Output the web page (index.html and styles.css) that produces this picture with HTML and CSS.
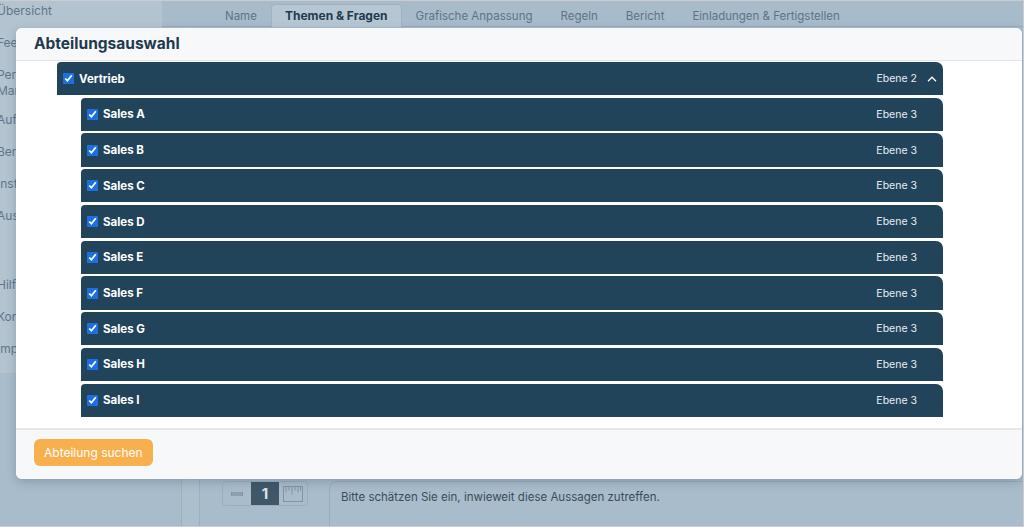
FILE: index.html
```html
<!DOCTYPE html>
<html lang="de">

<head>
    <meta charset="UTF-8">
    <meta name="viewport" content="width=device-width, initial-scale=1.0">
    <title>Umfrage bearbeiten</title>
    <link rel="stylesheet" href="styles.css">
</head>

<body>
    <div class="frame">
        <div class="page">
            <aside class="sidebar">
                <a href="#">Übersicht</a>
                <a href="#">Feedback</a>
                <a href="#" class="two-lines">Personal-<br>Management</a>
                <a href="#">Aufgaben</a>
                <a href="#">Berichte</a>
                <a href="#">Instrumente</a>
                <a href="#">Auswertung</a>
                <a href="#" class="gap-before">Hilfe</a>
                <a href="#">Kontakt</a>
                <a href="#">Impressum</a>
            </aside>

            <main class="main">
                <nav class="tabs">
                    <a href="#">Name</a>
                    <a href="#" class="active">Themen &amp; Fragen</a>
                    <a href="#">Grafische Anpassung</a>
                    <a href="#">Regeln</a>
                    <a href="#">Bericht</a>
                    <a href="#">Einladungen &amp; Fertigstellen</a>
                </nav>

                <div class="content">
                    <div class="col-a"></div>
                    <div class="col-b"></div>
                    <div class="editor">
                        <div class="question">
                            <div class="scale-switch">
                                <span class="seg">
                                    <svg width="12" height="6" viewBox="0 0 12 6">
                                        <rect x="0" y="1" width="12" height="4" fill="#7f95a6" />
                                        <path d="M2 1v4M4 1v4M6 1v4M8 1v4M10 1v4" stroke="#a9bccb" stroke-width="0.6" />
                                    </svg>
                                </span>
                                <span class="seg current">1</span>
                                <span class="seg">
                                    <svg width="20" height="16" viewBox="0 0 20 16">
                                        <rect x="0.5" y="0.5" width="19" height="15" fill="none" stroke="#7f95a6" />
                                        <path d="M3 0.5v6M6 0.5v4M9 0.5v8M12 0.5v4M15 0.5v6M17.5 0.5v4" stroke="#7f95a6" />
                                    </svg>
                                </span>
                            </div>
                            <div class="question-text">Bitte schätzen Sie ein, inwieweit diese Aussagen zutreffen.</div>
                        </div>
                    </div>
                </div>
            </main>
        </div>

        <div class="modal">
            <div class="modal-header">Abteilungsauswahl</div>
            <div class="modal-body">
                <div class="tree">
                    <div class="dept">
                        <label class="dept-name"><input type="checkbox" checked> Vertrieb</label>
                        <span class="level">Ebene 2</span>
                        <svg class="toggle" width="10" height="6" viewBox="0 0 10 6">
                            <path d="M1 5.2L5 1.2l4 4" fill="none" stroke="#fff" stroke-width="1.3" />
                        </svg>
                    </div>
                    <div class="children" id="children"></div>
                </div>
            </div>
            <div class="modal-footer">
                <button class="btn-search">Abteilung suchen</button>
            </div>
        </div>
    </div>

    <script>
        const subDepartments = ['Sales A', 'Sales B', 'Sales C', 'Sales D', 'Sales E',
            'Sales F', 'Sales G', 'Sales H', 'Sales I'];

        const children = document.getElementById('children');
        subDepartments.forEach(name => {
            const row = document.createElement('div');
            row.className = 'dept';
            row.innerHTML = `
                <label class="dept-name"><input type="checkbox" checked> ${name}</label>
                <span class="level">Ebene 3</span>
                <span class="toggle"></span>
            `;
            children.appendChild(row);
        });
    </script>
</body>

</html>
```

FILE: styles.css
```css
* {
    box-sizing: border-box;
}

html,
body {
    margin: 0;
    height: 100%;
    overflow: hidden;
}

body {
    font-family: Inter, "Noto Sans", sans-serif;
    color: #1f3a50;
}

.frame {
    position: relative;
    width: 1024px;
    height: 527px;
    border: 1px solid #c9cdd1;
    border-left: none;
    background-color: #a9bccb;
    overflow: hidden;
}

.page {
    display: grid;
    grid-template-columns: 162px 1fr;
    height: 100%;
}

/* left navigation */
.sidebar {
    display: flex;
    flex-direction: column;
    align-self: start;
    height: 372px;
    padding-top: 2px;
    background-color: #b3c4d0;
    overflow: hidden;
}

.sidebar a {
    margin-left: -3px;
    height: 33px;
    font-size: 12px;
    line-height: 16px;
    color: #5f7689;
    text-decoration: none;
    white-space: nowrap;
}

.sidebar a.two-lines {
    height: 47px;
}

.sidebar a.gap-before {
    margin-top: 37px;
}

/* tabs */
.main {
    display: flex;
    flex-direction: column;
}

.tabs {
    display: flex;
    height: 26px;
    padding-left: 49px;
    padding-top: 3px;
    border-bottom: 1px solid #97acbc;
    background-color: #a8bbca;
}

.tabs a {
    padding: 0 13px;
    font-size: 11.5px;
    line-height: 22px;
    color: #5d7487;
    text-decoration: none;
    border: 1px solid transparent;
    border-bottom: none;
    border-radius: 4px 4px 0 0;
}

.tabs a.active {
    background-color: #b6c7d3;
    border-color: #9fb2c1;
    font-weight: 700;
    font-size: 12px;
    color: #1f3a50;
    margin-bottom: -1px;
}

.content {
    flex: 1;
    display: grid;
    grid-template-columns: 20px 18px 1fr;
}

.col-a {
    border-right: 1px solid #9db0bf;
}

.col-b {
    border-right: 1px solid #9db0bf;
    background-color: #acbfcd;
}

.editor {
    padding: 454px 0 0 22px;
}

.question {
    display: flex;
    align-items: flex-start;
    gap: 21px;
}

.scale-switch {
    display: flex;
    height: 25px;
    border: 1px solid #9bafbe;
    border-radius: 3px;
    overflow: hidden;
}

.scale-switch .seg {
    display: flex;
    align-items: center;
    justify-content: center;
    width: 28px;
}

.scale-switch .seg.current {
    background-color: #405769;
    color: #dbe4ea;
    font-weight: 700;
    font-size: 15px;
}

.question-text {
    flex: 1;
    height: 60px;
    padding: 8px 11px;
    border: 1px solid #98adbc;
    border-right: none;
    border-radius: 7px 0 0 0;
    font-size: 11.5px;
    color: #3b4c5a;
}

/* department picker */
.modal {
    position: absolute;
    left: 16px;
    top: 27px;
    right: 1px;
    height: 451px;
    display: flex;
    flex-direction: column;
    background-color: #fff;
    border-radius: 6px;
    box-shadow: 0 3px 10px rgba(40, 60, 80, 0.25);
    overflow: hidden;
}

.modal-header {
    height: 33px;
    padding: 6px 18px 0;
    background-color: #f7f8fa;
    border-bottom: 1px solid #e2e5e9;
    font-size: 15.5px;
    font-weight: 700;
    color: #1e3a4f;
}

.modal-body {
    height: 367px;
    padding-top: 1px;
    overflow: hidden;
}

.tree {
    width: 886px;
    margin-left: 41px;
}

.children {
    margin-left: 24px;
}

.dept {
    display: flex;
    align-items: center;
    height: 33.2px;
    margin-bottom: 2.55px;
    padding: 0 6px;
    background-color: #21445b;
    border-radius: 4px 7px 0 0;
    color: #fff;
}

.dept-name {
    flex: 1;
    display: flex;
    align-items: center;
    gap: 5px;
    font-size: 11.5px;
    font-weight: 700;
}

.dept-name input {
    width: 11px;
    height: 11px;
    margin: 0;
    accent-color: #1a6fe6;
}

.level {
    font-size: 10.5px;
    color: #e9eef2;
}

.toggle {
    width: 10px;
    margin-left: 10px;
}

.modal-footer {
    flex: 1;
    padding: 9px 18px;
    background-color: #f7f8fa;
    border-top: 2px solid #e5e8eb;
}

.btn-search {
    height: 27px;
    padding: 0 10px;
    border: none;
    border-radius: 6px;
    background-color: #f8b04f;
    color: #fff;
    font-family: inherit;
    font-size: 12px;
    cursor: pointer;
}
```
